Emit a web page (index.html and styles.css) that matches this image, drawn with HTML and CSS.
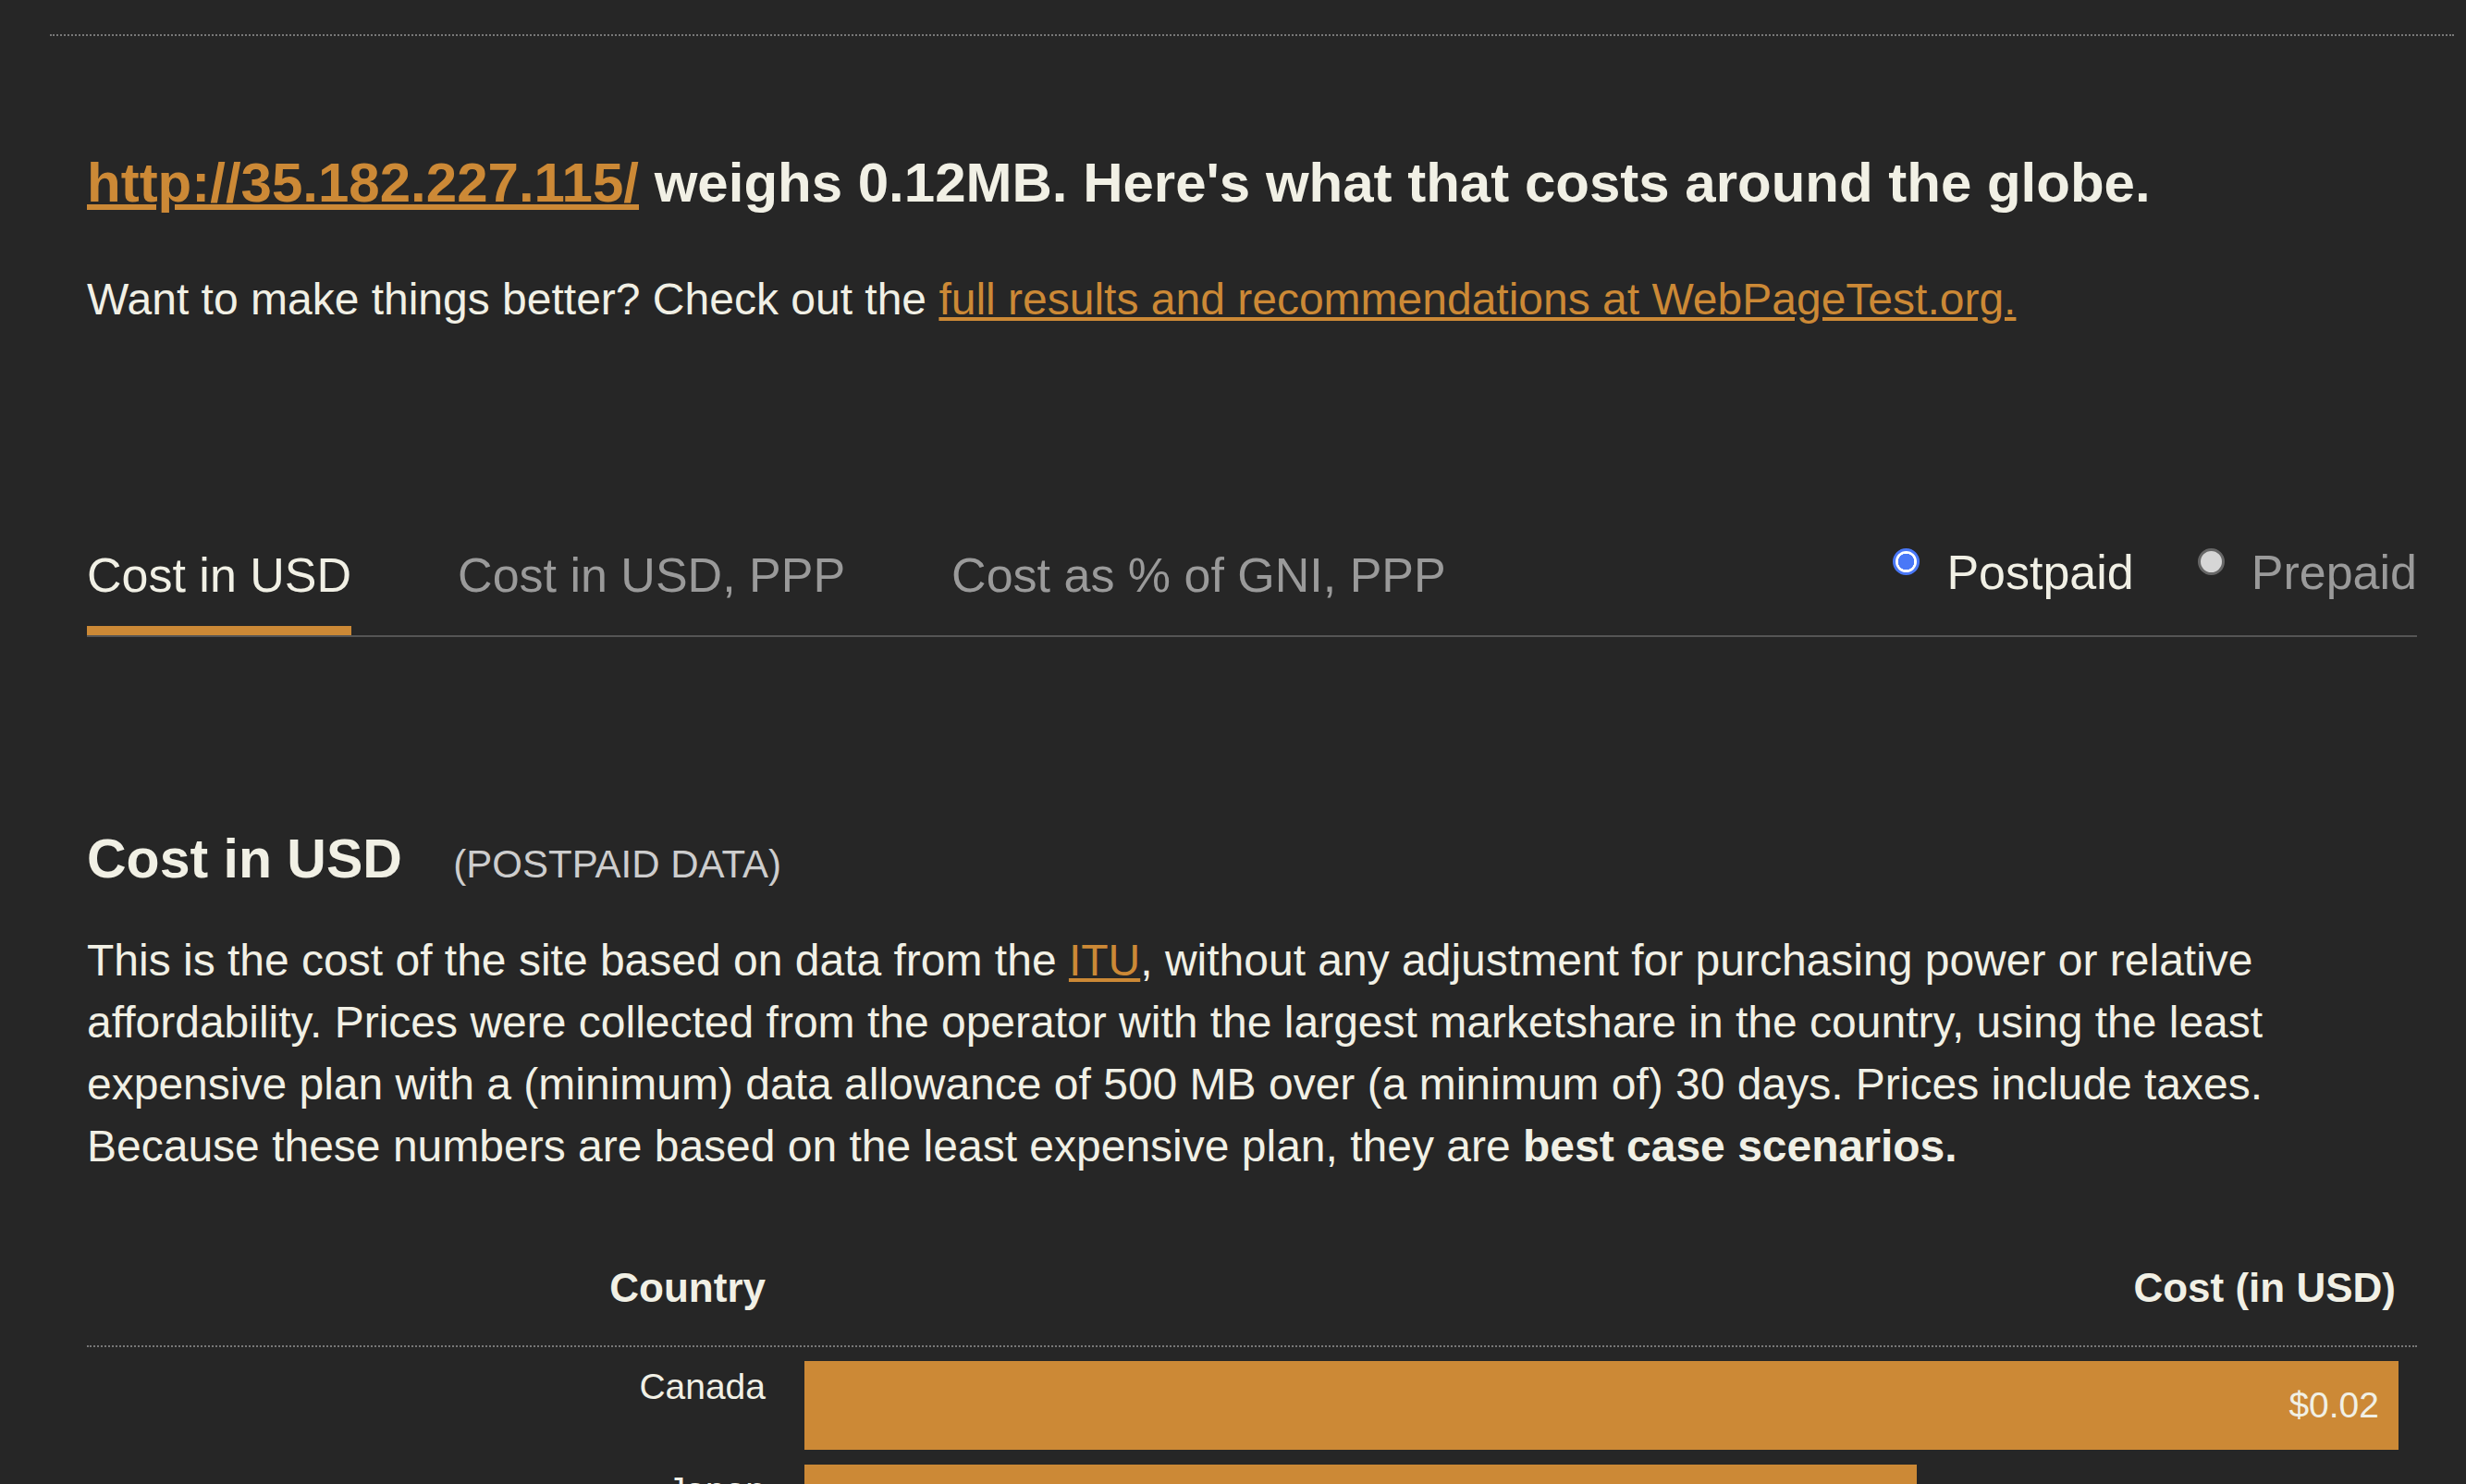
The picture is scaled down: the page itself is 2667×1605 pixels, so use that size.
FILE: index.html
```html
<!DOCTYPE html>
<html lang="en">
<head>
<meta charset="utf-8">
<title>What does my site cost?</title>
<link rel="stylesheet" href="styles.css">
</head>
<body>
<div class="top-rule"></div>
<main class="page">
  <h1 class="headline"><a class="link" href="#">http://35.182.227.115/</a> weighs 0.12MB. Here's what that costs around the globe.</h1>
  <p class="intro">Want to make things better? Check out the <a class="link" href="#">full results and recommendations at WebPageTest.org.</a></p>

  <div class="tabbar">
    <nav class="tabs">
      <a class="tab tab-active" href="#">Cost in USD</a>
      <a class="tab" href="#">Cost in USD, PPP</a>
      <a class="tab" href="#">Cost as % of GNI, PPP</a>
    </nav>
    <div class="plans">
      <label class="plan plan-on"><span class="radio radio-on"></span>Postpaid</label>
      <label class="plan"><span class="radio"></span>Prepaid</label>
    </div>
  </div>

  <h2 class="section-title">Cost in USD <span class="section-note">(POSTPAID DATA)</span></h2>
  <p class="desc">This is the cost of the site based on data from the <a class="link" href="#">ITU</a>, without any adjustment for purchasing power or relative affordability. Prices were collected from the operator with the largest marketshare in the country, using the least expensive plan with a (minimum) data allowance of 500 MB over (a minimum of) 30 days. Prices include taxes. Because these numbers are based on the least expensive plan, they are <strong>best case scenarios.</strong></p>

  <div class="chart">
    <div class="chart-head">
      <div class="col-country">Country</div>
      <div class="col-cost">Cost (in USD)</div>
    </div>
    <div class="chart-body">
      <div class="row">
        <div class="country">Canada</div>
        <div class="bar-cell"><div class="bar" style="width:100%"><span class="bar-value">$0.02</span></div></div>
      </div>
      <div class="row">
        <div class="country">Japan</div>
        <div class="bar-cell"><div class="bar" style="width:69.8%"><span class="bar-value">$0.01</span></div></div>
      </div>
    </div>
  </div>
</main>
</body>
</html>
```
FILE: styles.css
```css
html, body {
  margin: 0;
  padding: 0;
  background: #262626;
}
body {
  color: #f1f0e5;
  font-family: "Liberation Sans", Arial, sans-serif;
  overflow: hidden;
}
.top-rule {
  margin: 37px 13px 0 54px;
  border-top: 2px dotted #787878;
}
.page {
  padding: 0 53px 0 94px;
}
.link {
  color: #cc8936;
  text-decoration: underline;
}
.headline {
  margin: 122px 0 0;
  font-size: 60px;
  line-height: 74px;
  font-weight: bold;
}
.intro {
  margin: 55px 0 0;
  font-size: 48px;
  line-height: 67px;
}
.tabbar {
  margin-top: 234px;
  display: flex;
  justify-content: space-between;
  align-items: flex-start;
  border-bottom: 2px solid #555;
}
.tabs {
  display: flex;
  gap: 115px;
}
.tab {
  display: block;
  font-size: 52px;
  line-height: 62px;
  padding-bottom: 24px;
  border-bottom: 10px solid transparent;
  color: #9a9a9a;
  text-decoration: none;
}
.tab-active {
  color: #f1f0e5;
  border-bottom-color: #cc8936;
}
.plans {
  display: flex;
  gap: 69px;
  margin-top: -3px;
}
.plan {
  display: flex;
  align-items: flex-start;
  gap: 29px;
  font-size: 52px;
  line-height: 62px;
  color: #9a9a9a;
}
.plan-on {
  color: #f1f0e5;
}
.radio {
  box-sizing: border-box;
  width: 29px;
  height: 29px;
  margin-top: 5px;
  border-radius: 50%;
  border: 3px solid #676767;
  background: #d6d6d6;
}
.radio-on {
  border: 3px solid #4a78f7;
  background: radial-gradient(circle, #4a78f7 0 8.5px, #ffffff 9px 100%);
}
.section-title {
  margin: 205px 0 0;
  font-size: 59px;
  line-height: 70px;
  font-weight: bold;
}
.section-note {
  margin-left: 39px;
  font-size: 42px;
  line-height: 42px;
  font-weight: normal;
  color: #cdcdcd;
}
.desc {
  margin: 41px 0 0;
  font-size: 48px;
  line-height: 67px;
}
.desc strong {
  font-weight: bold;
}
.chart {
  margin-top: 94px;
}
.chart-head {
  display: grid;
  grid-template-columns: 734px 1fr;
  column-gap: 42px;
  padding: 0 23px 36px 0;
  border-bottom: 2px dotted #787878;
  font-size: 44px;
  line-height: 52px;
  font-weight: bold;
}
.col-country,
.col-cost {
  text-align: right;
}
.chart-body {
  display: flex;
  flex-direction: column;
  gap: 16px;
  padding: 15px 20px 0 0;
}
.row {
  display: grid;
  grid-template-columns: 734px 1fr;
  column-gap: 42px;
}
.country {
  padding-top: 4px;
  text-align: right;
  font-size: 39px;
  line-height: 48px;
}
.bar {
  display: flex;
  justify-content: flex-end;
  align-items: center;
  height: 96px;
  background: #cc8936;
  box-sizing: border-box;
  padding-right: 21px;
}
.bar-value {
  font-size: 39px;
  color: #f1f0e5;
}
```
